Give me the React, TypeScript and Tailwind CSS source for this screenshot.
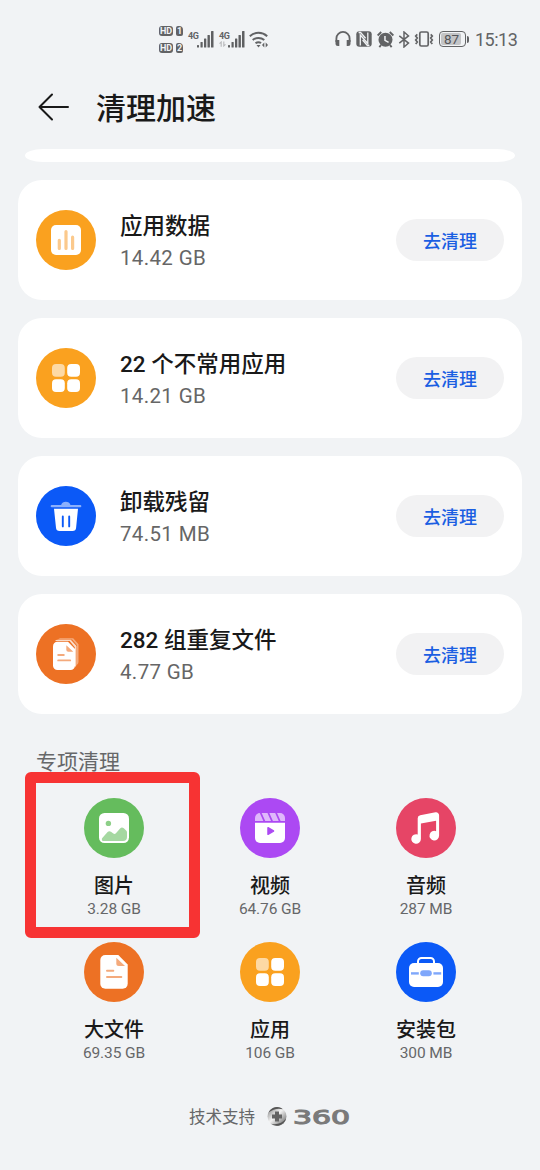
import type { ReactNode } from "react";

const Disc = ({ color, children }: { color: string; children: ReactNode }) => (
  <svg viewBox="0 0 60 60" className="size-[60px] shrink-0">
    <circle cx="30" cy="30" r="30" fill={color} />
    {children}
  </svg>
);

const ChartIcon = () => (
  <Disc color="#faa11f">
    <rect x="15" y="15" width="30" height="30" rx="5" fill="#fff" />
    <g stroke="#fbc98c" strokeWidth="3.2" strokeLinecap="round">
      <path d="M23.3 30.3v8.2M30 21.6v16.9M36.6 27.2v11.3" />
    </g>
  </Disc>
);

const AppsIcon = () => (
  <Disc color="#faa11f">
    <g fill="#fff">
      <rect x="16" y="16" width="12.8" height="12.8" rx="4" fill="#fdd9a4" />
      <rect x="31.2" y="16" width="12.8" height="12.8" rx="4" />
      <rect x="16" y="31.2" width="12.8" height="12.8" rx="4" />
      <rect x="31.2" y="31.2" width="12.8" height="12.8" rx="4" />
    </g>
  </Disc>
);

const TrashIcon = () => (
  <Disc color="#0b59f7">
    <path d="M15.8 19h9.3a5 5 0 0 1 9.4 0h9.7a1.1 1.1 0 0 1 0 2.3H15.8a1.1 1.1 0 0 1 0-2.3z" fill="#8bb0fc" />
    <path d="M18 22.7h24l-1.9 19a3.6 3.6 0 0 1-3.6 3.3H23.6a3.6 3.6 0 0 1-3.6-3.3z" fill="#fff" />
    <path d="M26.8 30.4v10M33.2 30.4v10" stroke="#0b59f7" strokeWidth="1.9" strokeLinecap="round" />
  </Disc>
);

const CopiesIcon = () => (
  <Disc color="#ed7124">
    <path d="M22 15.600a3.500 3.500 0 0 1 2-1.400h13.200l5.300 6v17.800a3.500 3.500 0 0 1-1.500 2.800V21.200l-4.900-5.600z" fill="#f4aa7c" />
    <path d="M19 17a3.500 3.500 0 0 1 2.500-1.200h13.300l5.700 6.200v18.500a3.500 3.500 0 0 1-1.700 2.800V23.200L33.600 17z" fill="#fadcc8" />
    <path d="M21.5 17.7H32l7 7.2v16.6a4.5 4.5 0 0 1-4.5 4.5h-13a4.5 4.5 0 0 1-4.5-4.5V22.2a4.5 4.5 0 0 1 4.5-4.5z" fill="#fff" />
    <path d="M30.3 21.2l7 6.6h-5a2 2 0 0 1-2-2z" fill="#f4aa7c" />
    <path d="M22.2 31h5.6M22.2 36.4h12" stroke="#f4aa7c" strokeWidth="1.9" strokeLinecap="round" />
  </Disc>
);

const ImageIcon = () => (
  <Disc color="#65bc5d">
    <rect x="15" y="15" width="30" height="30" rx="5.5" fill="#fff" />
    <circle cx="24.4" cy="25.4" r="2.7" fill="#8dcf88" />
    <path
      d="M18.3 40l5.3-6a2.6 2.6 0 0 1 3.4-.2l2.3 1.7a2 2 0 0 0 2.6-.2l4.2-4.8a2.6 2.6 0 0 1 3.7-.2l2.6 2.5c.4.5.6 1 .6 1.6V39a4 4 0 0 1-4 4H20a1.8 1.8 0 0 1-1.7-3z"
      fill="#a5d8a1"
    />
  </Disc>
);

const VideoIcon = () => (
  <Disc color="#ac49f3">
    <path d="M20 15h20a5 5 0 0 1 5 5v3H15v-3a5 5 0 0 1 5-5z" fill="#dfb8fb" />
    <path d="M20.5 14.5l4 9M28.2 14.5l4 9M35.9 14.5l4 9" stroke="#ac49f3" strokeWidth="1.8" />
    <path d="M15 24.8h30V40a5 5 0 0 1-5 5H20a5 5 0 0 1-5-5z" fill="#fff" />
    <path d="M28 29.7l5.5 3.3-5.5 3.3z" fill="#ac49f3" stroke="#ac49f3" strokeWidth="1.5" strokeLinejoin="round" />
  </Disc>
);

const MusicIcon = () => (
  <Disc color="#e64566">
    <path
      d="M24.9 25.4V41a4.8 4.8 0 1 1-3.2-4.5V20.2a3 3 0 0 1 2.5-3l15.3-2.9a3 3 0 0 1 3.6 2.900v20.400a4.800 4.800 0 1 1-3-4.400V22.700z"
      fill="#fff"
    />
  </Disc>
);

const FileIcon = () => (
  <Disc color="#ed7124">
    <path d="M21.3 13h13l9.4 9.4v19.3a5 5 0 0 1-5 5H21.3a5 5 0 0 1-5-5V18a5 5 0 0 1 5-5z" fill="#fff" />
    <path d="M32.3 15.8l8.7 8.3h-6.2a2.5 2.5 0 0 1-2.5-2.5z" fill="#f4aa7c" />
    <path d="M23 28.7h6.3M23 35.1h14.3" stroke="#f4aa7c" strokeWidth="2" strokeLinecap="round" />
  </Disc>
);

const BagIcon = () => (
  <Disc color="#0b59f7">
    <path d="M22 22v-2.5a3.5 3.5 0 0 1 3.5-3.500h9a3.500 3.500 0 0 1 3.500 3.500V22" fill="none" stroke="#fff" strokeWidth="2" />
    <rect x="13" y="21" width="34" height="24" rx="5" fill="#fff" />
    <g fill="#7fa7fb">
      <rect x="15" y="30.2" width="7.8" height="2.4" />
      <rect x="37.4" y="30.2" width="7.8" height="2.4" />
      <rect x="24.2" y="28.3" width="11.6" height="6" rx="3" />
    </g>
  </Disc>
);

const Signal = () => (
  <svg viewBox="0 0 17 17" className="h-[17px] w-[17px]" fill="#5f6062">
    <rect x="0" y="14" width="2" height="2.5" rx=".5" />
    <rect x="3.5" y="11" width="2.2" height="5.5" rx=".5" />
    <rect x="7" y="7.5" width="2.3" height="9" rx=".5" />
    <rect x="10.5" y="4" width="2.4" height="12.5" rx=".5" />
    <rect x="14" y="0" width="2.5" height="16.5" rx=".5" />
  </svg>
);

const HdBadge = ({ sim }: { sim: string }) => (
  <div className="flex gap-[3px] text-[9px] leading-[10px] font-bold text-[#f1f3f5]">
    <span className="h-[10px] w-[14px] rounded-[3px] bg-[#626365] text-center">HD</span>
    <span className="h-[10px] w-[7px] rounded-[2px] rounded-tr-[4px] bg-[#626365] text-center">{sim}</span>
  </div>
);

const StatusBar = () => (
  <div className="flex h-[78px] items-center pl-[159px] text-[#626365]">
    <div className="flex w-[29px] flex-col gap-[7px] pt-px">
      <HdBadge sim="1" />
      <HdBadge sim="2" />
    </div>
    <span className="h-[17px] w-[9px] text-[9px] leading-[10px] font-bold tracking-[-0.5px]">4G</span>
    <Signal />
    <div className="ml-[5px] flex h-[17px] w-[9px] flex-col">
      <span className="text-[9px] leading-[10px] font-bold tracking-[-0.5px]">4G</span>
      <svg viewBox="0 0 8 6" className="h-[6px] w-[7px]" fill="none" stroke="#b9babc" strokeWidth="1.3">
        <path d="M2.5 6V.8L.6 2.6M5.5 0v5.2l1.9-1.8" />
      </svg>
    </div>
    <Signal />
    <svg viewBox="0 0 20 17" className="ml-[4px] h-[17px] w-[20px]" fill="none" stroke="#626365" strokeWidth="2">
      <path d="M.8 5.2a13 13 0 0 1 17.4 0M3.7 9a9 9 0 0 1 11.6 0M6.5 12.3a5 5 0 0 1 5.6-.3" />
      <path d="M7.5 14h4l-2 2.5z" fill="#626365" stroke="none" />
      <path d="M15.3 11.5v5l-2.3-2.5zM16.7 11.5v5l2.3-2.5z" fill="#626365" stroke="none" />
    </svg>

    <svg viewBox="0 0 16 16" className="ml-[66px] size-[16px]" fill="none" stroke="#626365" strokeWidth="1.8">
      <path d="M1.4 11V7.5a6.6 6.6 0 0 1 13.2 0V11" />
      <path d="M.5 9h3.8v6H3A2.5 2.5 0 0 1 .5 12.5zM15.5 9h-3.8v6H13a2.5 2.5 0 0 0 2.5-2.5z" fill="#626365" stroke="none" />
    </svg>
    <svg viewBox="0 0 16 16" className="ml-[5px] size-[16px]">
      <rect x=".3" y=".3" width="15.4" height="15.4" rx="3" fill="#626365" />
      <path d="M4.3 14.5V4l7.5 8.5V1.5M2.6 1.5h2l5 5.7M13.4 14.5h-2L6.6 9" fill="none" stroke="#f1f3f5" strokeWidth="1.3" />
    </svg>
    <svg viewBox="0 0 16 16" className="ml-[5px] size-[17px]">
      <circle cx="8" cy="8.3" r="6.6" fill="#626365" />
      <path d="M.6 4.200L4 1M15.400 4.200L12 1M3.800 13.200l-1.600 2M12.200 13.200l1.600 2" stroke="#626365" strokeWidth="1.800" />
      <path d="M7.500 4.800v4l3.400 1.900" fill="none" stroke="#f1f3f5" strokeWidth="1.400" />
    </svg>
    <svg viewBox="0 0 12 17" className="ml-[4px] h-[17px] w-[12px]" fill="none" stroke="#626365" strokeWidth="1.500">
      <path d="M1.300 4.800l9.200 7.300L6 16V1l4.500 3.900-9.200 7.300" />
    </svg>
    <svg viewBox="0 0 20 16" className="ml-[4px] h-[16px] w-[20px]" fill="none" stroke="#626365" strokeWidth="1.700">
      <rect x="5.800" y="1" width="8.400" height="14" rx="1.500" />
      <path d="M3.300 3.300L1.700 5l1.600 2-1.600 2 1.600 2-1.600 2M16.700 3.300L18.300 5l-1.600 2 1.600 2-1.600 2 1.600 2" />
    </svg>
    <div className="ml-[5px] flex h-[16px] w-[27px] rounded-[4px] border-[1.500px] border-[#626365] p-px">
      <span className="w-[20px] rounded-[2px] bg-[#c3c4c6] pl-[3px] text-[13.500px] leading-[12px] text-[#55565a]">87</span>
    </div>
    <span className="ml-px h-[7px] w-[2px] rounded-r bg-[#626365]" />
    <span className="ml-[6px] pt-[2px] text-[18px] leading-[22px] tracking-[-0.5px] whitespace-nowrap">15:13</span>
  </div>
);

const junk = [
  { title: "应用数据", size: "14.42 GB", icon: <ChartIcon /> },
  { title: "22 个不常用应用", size: "14.21 GB", icon: <AppsIcon /> },
  { title: "卸载残留", size: "74.51 MB", icon: <TrashIcon /> },
  { title: "282 组重复文件", size: "4.77 GB", icon: <CopiesIcon /> },
];

const categories = [
  { label: "图片", size: "3.28 GB", icon: <ImageIcon />, marked: true },
  { label: "视频", size: "64.76 GB", icon: <VideoIcon /> },
  { label: "音频", size: "287 MB", icon: <MusicIcon /> },
  { label: "大文件", size: "69.35 GB", icon: <FileIcon /> },
  { label: "应用", size: "106 GB", icon: <AppsIcon /> },
  { label: "安装包", size: "300 MB", icon: <BagIcon /> },
];

const Logo360 = () => (
  <svg viewBox="0 0 96 24" className="ml-[11px] h-[24px] w-[96px]">
    <defs>
      <linearGradient id="ball" x1="0" y1="0" x2="1" y2="1">
        <stop offset="0" stopColor="#777" />
        <stop offset=".45" stopColor="#f4f4f4" />
        <stop offset="1" stopColor="#555" />
      </linearGradient>
    </defs>
    <circle cx="11" cy="11.500" r="9.500" fill="url(#ball)" />
    <path d="M2.500 7.500A9.500 9.500 0 0 1 17 4.200C12 2.800 7 4 2.500 7.500zM20 13.500A9.500 9.500 0 0 1 5 18.700c5.500 1.500 11.500-.4 15-5.200z" fill="#555" />
    <path d="M11 6.500v10M6 11.500h10" stroke="#636363" strokeWidth="4" />
    <text
      x="27"
      y="19"
      textLength="57"
      lengthAdjust="spacingAndGlyphs"
      fill="#7a7a7a"
      stroke="#7a7a7a"
      strokeWidth="1.100"
      className="font-['DejaVu_Sans'] text-[19px]"
    >
      360
    </text>
  </svg>
);

export default function App() {
  return (
    <div className="h-[1170px] w-[540px] overflow-hidden bg-[#f1f3f5] font-['Roboto','Noto_Sans_CJK_SC',sans-serif] text-[#191919]">
      <StatusBar />
      <header className="flex h-[60px] items-center pl-[38px]">
        <svg viewBox="0 0 32 28" className="mb-[3px] h-[28px] w-[32px]" fill="none" stroke="#191919" strokeWidth="2" strokeLinecap="round" strokeLinejoin="round">
          <path d="M14 1.500L1.500 14 14 26.500M1.500 14H30" />
        </svg>
        <h1 className="ml-[26px] pt-[2px] text-[30px] leading-[40px] font-medium">清理加速</h1>
      </header>

      {/* bottom edge of the card scrolled under the header */}
      <div className="mx-[25px] mt-[11px] h-[13px] rounded-[18px/6.500px] bg-white" />

      <ul className="mt-[18px] flex flex-col gap-[18px] px-[18px]">
        {junk.map((j) => (
          <li key={j.title} className="flex h-[120px] items-center rounded-[24px] bg-white px-[18px]">
            {j.icon}
            <div className="ml-[24px] flex-1 pt-[4px]">
              <div className="text-[22.500px] leading-[32px] font-medium">{j.title}</div>
              <div className="text-[20.500px] leading-[32px] tracking-[0.350px] text-[#666]">{j.size}</div>
            </div>
            <button className="h-[42px] w-[108px] rounded-full bg-[#f2f2f3] pt-[2px] text-[18px] font-medium text-[#1b5fe2]">去清理</button>
          </li>
        ))}
      </ul>

      <h2 className="mt-[33px] pl-[36px] text-[21px] leading-[30px] text-[#666769]">专项清理</h2>
      <div className="mt-[21px] grid grid-cols-3 gap-y-[22px] px-[36px]">
        {categories.map((c) => (
          <div key={c.label} className="relative flex h-[122px] flex-col items-center">
            {c.icon}
            <div className="mt-[15px] text-[20px] leading-[26px] font-medium">{c.label}</div>
            <div className="-mt-px text-[15.500px] leading-[22px] tracking-[-0.100px] text-[#666769]">{c.size}</div>
            {c.marked && (
              <div className="absolute -top-[26px] -left-[11px] h-[166px] w-[175px] rounded-[6px] border-[11px] border-[#f73333]" />
            )}
          </div>
        ))}
      </div>

      <footer className="mt-[41px] flex h-[24px] items-center pl-[189px] text-[16.500px] whitespace-nowrap text-[#666769]">
        <span className="pt-[2px]">技术支持</span>
        <Logo360 />
      </footer>
    </div>
  );
}
